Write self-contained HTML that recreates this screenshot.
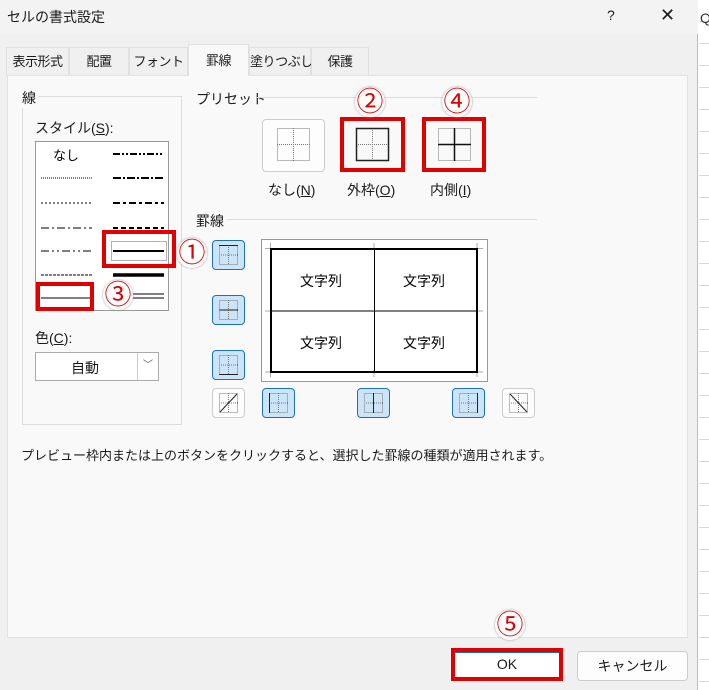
<!DOCTYPE html>
<html><head><meta charset="utf-8"><style>
*{box-sizing:border-box;margin:0;padding:0}
body{width:709px;height:690px;overflow:hidden;background:#fff;font-family:"Liberation Sans","Noto Sans CJK JP",sans-serif;font-size:13px;color:#1a1a1a;position:relative}
.a{position:absolute;white-space:nowrap}
.dlg{left:0;top:0;width:698px;height:690px;background:#f0f0f0;border-right:1px solid #bbb}
.tab{position:absolute;top:47px;height:29px;border:1px solid #e0e0e0;border-bottom:none;background:#f0f0f0;text-align:center;line-height:27px;font-size:13px;white-space:nowrap;letter-spacing:-0.5px}
.panel{left:7px;top:75px;width:681px;height:563px;background:#f9f9f9;border:1px solid #e2e2e2}
.sb{position:absolute;width:33px;height:30px;border:1px solid #1f6fb5;border-radius:4px;background:#cce4f7}
.sw{position:absolute;width:33px;height:30px;border:1px solid #ccc;border-radius:4px;background:#fdfdfd}
.rb{position:absolute;border:4px solid #e00000}
.c{position:absolute;width:30px;height:30px;border-radius:50%;background:#fff;color:#e00000;font-size:27px;line-height:30px;text-align:center;box-shadow:0 0 2px #999}
.hl{position:absolute;height:1px;background:#dcdcdc}
</style></head><body>
<div class="a" style="left:699px;top:0;width:10px;height:690px;background:#fff;background-image:repeating-linear-gradient(#fff 0 21px,#d8d8d8 21px 22px)"></div>
<div class="a" style="left:700px;top:10px;font-size:14px;color:#333">Q</div>
<div class="a dlg"></div>
<div class="a" style="left:0;top:0;width:698px;height:34px;background:#f3f3f3"></div>
<div class="a" style="left:7px;top:7px;font-size:14px">セルの書式設定</div>
<div class="a" style="left:607px;top:7px;font-size:14px">?</div>
<div class="a" style="left:660px;top:5px;font-size:18px;font-weight:300">✕</div>

<div class="tab" style="left:6px;width:63px">表示形式</div>
<div class="tab" style="left:69px;width:60px">配置</div>
<div class="tab" style="left:129px;width:59px">フォント</div>
<div class="tab" style="left:249px;width:62px">塗りつぶし</div>
<div class="tab" style="left:311px;width:58px">保護</div>
<div class="a panel"></div>
<div class="tab" style="left:188px;width:61px;top:44px;height:32px;background:#f9f9f9;line-height:31px;z-index:2">罫線</div>

<div class="a" style="left:22px;top:96px;width:160px;height:329px;border:1px solid #dcdcdc"></div>
<div class="a" style="left:20px;top:88px;background:#f9f9f9;padding:0 2px;font-size:14px">線</div>
<div class="a" style="left:35px;top:118px;font-size:14px">スタイル(<u>S</u>):</div>
<div class="a" style="left:35px;top:141px;width:134px;height:170px;background:#fff;border:1px solid #999"></div>
<svg class="a" style="left:35px;top:141px" width="134" height="170">
<text x="18" y="19" font-size="13" font-family="Liberation Sans,Noto Sans CJK JP,sans-serif">なし</text>
<g stroke="#000" stroke-width="1">
<line x1="6" y1="37" x2="57" y2="37" stroke-dasharray="1 1"/>
<line x1="6" y1="62" x2="57" y2="62" stroke-dasharray="2 2"/>
<line x1="6" y1="87" x2="57" y2="87" stroke-dasharray="8 3 2 3"/>
<line x1="6" y1="110" x2="57" y2="110" stroke-dasharray="8 3 2 3 2 3"/>
<line x1="6" y1="134" x2="57" y2="134" stroke-dasharray="3 1"/>
<line x1="6" y1="157" x2="57" y2="157"/>
<line x1="78" y1="13" x2="129" y2="13" stroke-width="2" stroke-dasharray="7 2 2 2 2 2"/>
<line x1="78" y1="37" x2="129" y2="37" stroke-width="2" stroke-dasharray="8 2 2 2"/>
<line x1="78" y1="62" x2="129" y2="62" stroke-width="2" stroke-dasharray="7 3 3 3"/>
<line x1="78" y1="87" x2="129" y2="87" stroke-width="2" stroke-dasharray="5 3"/>
<line x1="78" y1="110" x2="129" y2="110" stroke-width="2"/>
<line x1="78" y1="134" x2="129" y2="134" stroke-width="3.5"/>
<line x1="78" y1="153" x2="129" y2="153"/>
<line x1="78" y1="157" x2="129" y2="157"/>
</g>
<rect x="76.5" y="100.5" width="55" height="19" fill="none" stroke="#666" stroke-dasharray="1 1"/>
</svg>
<div class="rb" style="left:102px;top:230px;width:74px;height:38px"></div>
<div class="rb" style="left:36px;top:282px;width:58px;height:29px"></div>
<div class="a" style="left:35px;top:328px;font-size:14px">色(<u>C</u>):</div>
<div class="a" style="left:35px;top:352px;width:124px;height:29px;background:#fff;border:1px solid #aaa"></div>
<div class="a" style="left:71px;top:358px;font-size:14px">自動</div>
<div class="a" style="left:137px;top:353px;width:21px;height:27px;border-left:1px solid #ccc;text-align:center;font-size:10px;color:#555;line-height:25px">﹀</div>

<div class="a" style="left:196px;top:89px;font-size:14px">プリセット</div>
<div class="hl" style="left:257px;top:97px;width:280px"></div>
<div class="a" style="left:196px;top:211px;font-size:14px">罫線</div>
<div class="hl" style="left:227px;top:219px;width:310px"></div>

<div class="sw" style="left:262px;top:119px;width:63px;height:53px"></div>
<svg class="a" style="left:262px;top:119px" width="63" height="53"><g fill="none" stroke="#777" stroke-dasharray="1 1"><rect x="15.5" y="9.5" width="32" height="32"/><line x1="31.5" y1="9" x2="31.5" y2="42"/><line x1="15" y1="25.5" x2="48" y2="25.5"/></g></svg>
<svg class="a" style="left:341px;top:119px" width="63" height="53"><g fill="none" stroke="#777" stroke-dasharray="1 1"><line x1="31.5" y1="9" x2="31.5" y2="42"/><line x1="15" y1="25.5" x2="48" y2="25.5"/></g><rect x="15.5" y="9.5" width="32" height="32" fill="none" stroke="#222" stroke-width="1.5"/></svg>
<svg class="a" style="left:423px;top:119px" width="63" height="53"><rect x="15.5" y="9.5" width="32" height="32" fill="none" stroke="#777" stroke-dasharray="1 1"/><g stroke="#111" stroke-width="1.5"><line x1="31.5" y1="9" x2="31.5" y2="42"/><line x1="15" y1="25.5" x2="48" y2="25.5"/></g></svg>
<div class="rb" style="left:340px;top:117px;width:65px;height:55px"></div>
<div class="rb" style="left:422px;top:117px;width:64px;height:55px"></div>
<div class="a" style="left:268px;top:180px;font-size:14px">なし(<u>N</u>)</div>
<div class="a" style="left:347px;top:180px;font-size:14px">外枠(<u>O</u>)</div>
<div class="a" style="left:430px;top:180px;font-size:14px">内側(<u>I</u>)</div>

<div class="sb" style="left:212px;top:240px"></div>
<div class="sb" style="left:212px;top:295px"></div>
<div class="sb" style="left:212px;top:350px"></div>
<div class="sw" style="left:212px;top:388px"></div>
<div class="sb" style="left:262px;top:388px"></div>
<div class="sb" style="left:357px;top:388px"></div>
<div class="sb" style="left:452px;top:388px"></div>
<div class="sw" style="left:502px;top:388px"></div>
<svg class="a" style="left:0;top:0" width="700" height="690">
<defs><g id="ic"><g fill="none" stroke="#777" stroke-dasharray="1 1"><rect x="7.5" y="5.5" width="18" height="19"/><line x1="16.5" y1="5" x2="16.5" y2="25"/><line x1="7" y1="15" x2="26" y2="15"/></g></g></defs>
<use href="#ic" x="212" y="240"/><line x1="219" y1="245.5" x2="238" y2="245.5" stroke="#222"/>
<use href="#ic" x="212" y="295"/><line x1="219" y1="310" x2="238" y2="310" stroke="#222"/>
<use href="#ic" x="212" y="350"/><line x1="219" y1="374.5" x2="238" y2="374.5" stroke="#222"/>
<use href="#ic" x="212" y="388"/><line x1="220" y1="412" x2="237" y2="394" stroke="#222"/>
<use href="#ic" x="262" y="388"/><line x1="269.5" y1="393" x2="269.5" y2="413" stroke="#222"/>
<use href="#ic" x="357" y="388"/><line x1="373.5" y1="393" x2="373.5" y2="413" stroke="#222"/>
<use href="#ic" x="452" y="388"/><line x1="477.5" y1="393" x2="477.5" y2="413" stroke="#222"/>
<use href="#ic" x="502" y="388"/><line x1="510" y1="394" x2="527" y2="412" stroke="#222"/>
<rect x="261.5" y="239.5" width="226" height="142" fill="#fff" stroke="#999"/>
<g stroke="#aaa"><line x1="265" y1="248.5" x2="272" y2="248.5"/><line x1="270.5" y1="243" x2="270.5" y2="250"/><line x1="477" y1="243" x2="477" y2="250"/><line x1="475" y1="248.5" x2="483" y2="248.5"/><line x1="374" y1="243" x2="374" y2="250"/><line x1="265" y1="311" x2="272" y2="311"/><line x1="475" y1="311" x2="483" y2="311"/><line x1="265" y1="372" x2="272" y2="372"/><line x1="475" y1="372" x2="483" y2="372"/><line x1="270.5" y1="370" x2="270.5" y2="377"/><line x1="477" y1="370" x2="477" y2="377"/><line x1="374" y1="370" x2="374" y2="377"/></g>
<rect x="271" y="249" width="206" height="123" fill="none" stroke="#000" stroke-width="2"/>
<line x1="374.5" y1="249" x2="374.5" y2="372" stroke="#000"/>
<line x1="271" y1="311" x2="477" y2="311" stroke="#000"/>
<g font-size="14" font-family="Liberation Sans,Noto Sans CJK JP,sans-serif" fill="#000"><text x="300" y="286">文字列</text><text x="403" y="286">文字列</text><text x="300" y="348">文字列</text><text x="403" y="348">文字列</text></g>
</svg>

<div class="a" style="left:21px;top:445px;font-size:13px">プレビュー枠内または上のボタンをクリックすると、選択した罫線の種類が適用されます。</div>

<div class="a" style="left:451px;top:648px;width:112px;height:33px;background:#fff;border:4px solid #e00000;text-align:center;line-height:25px;font-size:14px"><div style="position:absolute;left:0;right:0;top:0;height:1px;background:#1f6fb5"></div>OK</div>
<div class="a" style="left:577px;top:651px;width:111px;height:30px;background:#fdfdfd;border:1px solid #ccc;border-radius:4px;text-align:center;line-height:28px;font-size:14px">キャンセル</div>

<div class="c" style="left:177px;top:238px">①</div>
<div class="c" style="left:355px;top:87px">②</div>
<div class="c" style="left:103px;top:280px">③</div>
<div class="c" style="left:442px;top:87px">④</div>
<div class="c" style="left:495px;top:610px">⑤</div>
</body></html>
